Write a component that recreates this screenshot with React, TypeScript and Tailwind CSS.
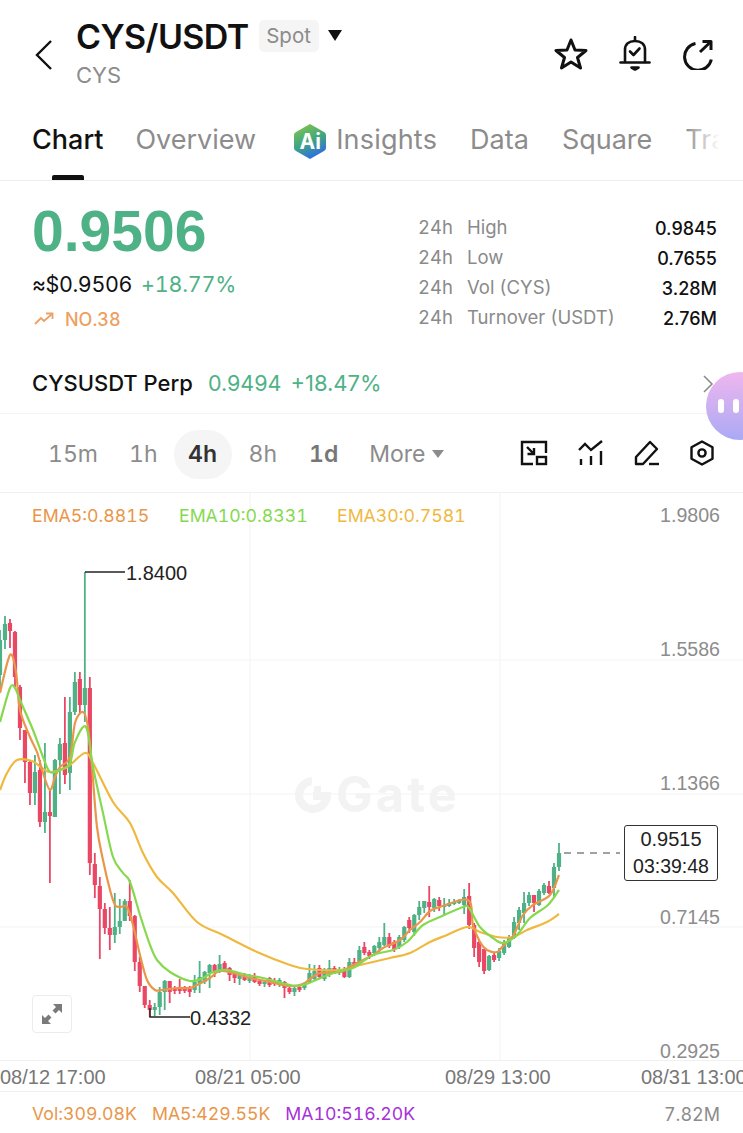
import React from "react";

const UP = "#4FB286";
const DOWN = "#EA4764";

// candle rows: up?, body top, body bottom, wick top, wick bottom (page y coords)
const candles: [number, number, number, number, number][] = [
  [1, 640, 675, 630, 690], [1, 624, 640, 616, 649], [0, 623, 631, 619, 648], [0, 632, 677, 631, 687], [0, 687, 728, 685, 740],
  [0, 730, 762, 730, 783], [0, 762, 793, 760, 805], [1, 772, 793, 755, 805], [0, 770, 822, 760, 827], [1, 812, 822, 743, 833],
  [0, 812, 816, 790, 883], [1, 760, 817, 759, 817], [1, 744, 760, 738, 794], [0, 743, 775, 697, 784], [1, 712, 773, 697, 790],
  [1, 682, 712, 672, 715], [0, 679, 705, 672, 713], [1, 688, 705, 572, 722], [0, 688, 863, 677, 875], [0, 864, 885, 853, 898],
  [0, 886, 909, 877, 959], [0, 909, 928, 903, 934], [0, 928, 935, 907, 950], [1, 927, 935, 893, 943], [1, 921, 927, 899, 934],
  [1, 901, 921, 899, 921], [0, 901, 916, 880, 921], [0, 916, 962, 915, 971], [0, 962, 986, 957, 992], [0, 986, 1005, 986, 1008],
  [0, 1005, 1010, 1000, 1017], [1, 1007, 1010, 1003, 1016], [1, 992, 1007, 987, 1015], [1, 981, 992, 980, 1010], [0, 981, 992, 981, 1003],
  [0, 989, 991, 986, 994], [0, 989, 991, 979, 994], [0, 989, 991, 986, 993], [0, 989, 992, 986, 997], [1, 982, 990, 975, 993],
  [1, 977, 983, 961, 993], [1, 972, 982, 971, 984], [1, 965, 973, 964, 988], [0, 965, 972, 964, 977], [1, 964, 970, 955, 973],
  [0, 963, 970, 961, 971], [0, 968, 975, 967, 981], [0, 974, 978, 972, 983], [1, 975, 979, 973, 985], [0, 977, 980, 973, 981],
  [1, 977, 981, 974, 983], [0, 977, 982, 973, 983], [0, 981, 984, 979, 986], [1, 982, 984, 982, 987], [0, 978, 985, 977, 987],
  [0, 981, 984, 978, 986], [1, 980, 985, 978, 987], [0, 982, 988, 981, 998], [0, 988, 992, 987, 994], [1, 988, 992, 986, 996],
  [0, 987, 990, 985, 992], [1, 983, 988, 982, 990], [1, 973, 982, 964, 983], [1, 971, 979, 965, 980], [0, 968, 977, 965, 979],
  [1, 971, 979, 968, 981], [1, 968, 975, 960, 977], [0, 968, 972, 966, 974], [1, 969, 973, 967, 975], [0, 969, 977, 967, 978],
  [1, 962, 977, 958, 978], [0, 962, 967, 958, 968], [1, 950, 963, 946, 965], [0, 947, 953, 942, 955], [0, 952, 956, 950, 959],
  [1, 946, 953, 945, 956], [1, 942, 948, 937, 952], [1, 937, 945, 923, 946], [0, 937, 946, 933, 948], [0, 942, 950, 940, 952],
  [1, 937, 947, 935, 949], [1, 927, 940, 926, 942], [0, 920, 928, 917, 933], [1, 915, 932, 914, 936], [1, 907, 915, 901, 920],
  [1, 901, 908, 901, 913], [0, 902, 907, 886, 917], [1, 899, 908, 898, 912], [0, 900, 906, 897, 911], [1, 905, 907, 898, 916],
  [1, 903, 906, 899, 907], [1, 902, 904, 899, 905], [1, 901, 903, 899, 904], [1, 897, 905, 889, 914], [0, 896, 925, 883, 929],
  [0, 925, 948, 923, 957], [0, 942, 962, 940, 967], [0, 949, 971, 949, 974], [1, 956, 970, 955, 971], [0, 955, 960, 953, 962],
  [1, 951, 958, 948, 961], [1, 942, 953, 940, 955], [1, 937, 947, 935, 948], [1, 922, 938, 917, 939], [1, 910, 923, 907, 930],
  [1, 903, 913, 892, 923], [1, 895, 903, 892, 906], [0, 895, 903, 895, 912], [1, 891, 905, 889, 906], [1, 885, 893, 883, 895],
  [0, 886, 893, 881, 894], [1, 867, 888, 863, 897], [1, 853, 867, 843, 871],
];

const ema5 = "0,693 10,655 16,672 20,710 30,737 37,752 43,773 50,790 55,777 60,767 70,757 75,723 83,712 88,727 92,767 97,827 103,860 110,890 115,905 120,907 127,907 133,925 140,955 147,980 155,990 162,990 177,988 190,988 197,985 210,978 217,972 223,971 233,973 250,978 270,982 290,986 303,984 310,979 320,973 340,972 353,965 373,955 383,948 400,940 410,930 420,922 430,911 440,907 468,900 473,925 480,942 487,950 497,952 503,946 513,936 523,915 533,905 550,895 559,875";
const ema10 = "0,722 10,688 15,688 20,700 33,730 43,757 50,772 60,770 70,763 75,742 86,727 93,767 103,813 113,857 123,873 130,882 140,915 150,945 157,960 170,972 190,981 203,978 213,972 227,970 247,975 263,978 290,985 303,985 323,977 340,971 353,968 373,955 393,950 407,942 423,925 440,917 463,907 469,908 480,927 493,938 503,943 517,935 530,918 548,905 559,890";
const ema30 = "0,790 7,773 17,760 32,761 42,768 50,772 63,769 70,765 85,753 93,763 113,802 130,823 143,853 157,877 173,893 197,922 223,935 257,952 290,965 307,969 340,970 360,965 390,958 410,953 430,942 447,935 467,927 480,932 497,937 513,937 527,930 547,922 559,914";

// catmull-rom through the points so the averages don't look kinked
function smooth(points: string) {
  const p = points.split(" ").map((s) => s.split(",").map(Number));
  let d = `M${p[0][0]} ${p[0][1]}`;
  for (let i = 0; i < p.length - 1; i++) {
    const a = p[i - 1] || p[i];
    const b = p[i];
    const c = p[i + 1];
    const e = p[i + 2] || c;
    d += `C${b[0] + (c[0] - a[0]) / 6} ${b[1] + (c[1] - a[1]) / 6} ${c[0] - (e[0] - b[0]) / 6} ${c[1] - (e[1] - b[1]) / 6} ${c[0]} ${c[1]}`;
  }
  return d;
}

function BackIcon() {
  return (
    <svg width="20" height="32" viewBox="0 0 20 32" fill="none" stroke="#111" strokeWidth="2.4">
      <path d="M17 2 L3 16 L17 30" />
    </svg>
  );
}

function StarIcon() {
  return (
    <svg width="34" height="34" viewBox="0 0 34 34" fill="none" stroke="#111" strokeWidth="3" strokeLinejoin="round">
      <path d="M17 3 L21 13 L32 13.5 L23.5 20.5 L26.5 31 L17 25 L7.5 31 L10.5 20.5 L2 13.5 L13 13 Z" />
    </svg>
  );
}

function BellIcon() {
  return (
    <svg width="32" height="36" viewBox="0 0 32 36" fill="none" stroke="#111" strokeWidth="2.6" strokeLinecap="round" strokeLinejoin="round">
      <path d="M6 26 V14 C6 8 10 5 16 5 C22 5 26 8 26 14 V26" />
      <path d="M1.5 26.5 H30.5" />
      <path d="M16 1 V4" />
      <path d="M11 15.5 L14.5 19 L20.5 12.5" />
      <path d="M12.5 31.5 H19.5 L16 33.5 Z" fill="#111" />
    </svg>
  );
}

function ShareIcon() {
  return (
    <svg width="32" height="32" viewBox="0 0 32 32" fill="none" stroke="#111" strokeWidth="3" strokeLinejoin="round">
      <path d="M13.5 5.5 A13.5 13.5 0 1 0 29.3 21.5" />
      <path d="M18 14 L28.5 4" />
      <path d="M20.5 3.5 H29 V12" />
    </svg>
  );
}

function ToolIcons() {
  return (
    <div className="flex items-center gap-[30px] -mt-[2px]">
      <svg width="28" height="26" viewBox="0 0 28 26" fill="none" stroke="#111" strokeWidth="2.4">
        <path d="M13 24 H2 V2 H26 V13" />
        <path d="M7 7 L13 13" />
        <path d="M7.5 14 H14 V8" />
        <rect x="17" y="17" width="9" height="7" />
      </svg>
      <svg width="26" height="26" viewBox="0 0 26 26" fill="none" stroke="#111" strokeWidth="2.4">
        <path d="M1 10 L7 4 L13 10 L24 1" />
        <path d="M3 19 V25 M13 16 V25 M23 11 V25" />
      </svg>
      <svg width="26" height="26" viewBox="0 0 26 26" fill="none" stroke="#111" strokeWidth="2.4" strokeLinejoin="round">
        <path d="M2 24 V17 L16 2 L23 9 L9 24 Z" />
        <path d="M15 24 H25" />
      </svg>
      <svg width="24" height="26" viewBox="0 0 24 26" fill="none" stroke="#111" strokeWidth="2.4" strokeLinejoin="round">
        <path d="M12 1.5 L22.5 7.2 V18.8 L12 24.5 L1.5 18.8 V7.2 Z" />
        <circle cx="12" cy="13" r="3.6" />
      </svg>
    </div>
  );
}

function AiBadge() {
  return (
    <span className="relative inline-flex w-[34px] h-[37px] items-center justify-center">
      <svg width="34" height="37" viewBox="0 0 34 37" className="absolute inset-0">
        <defs>
          <linearGradient id="aig" x1="0.1" y1="0" x2="0.5" y2="1">
            <stop offset="0" stopColor="#86C64A" />
            <stop offset="0.55" stopColor="#3FA77F" />
            <stop offset="1" stopColor="#2F6FE0" />
          </linearGradient>
        </defs>
        <path d="M17 1 L31 9 Q33 10 33 12 V25 Q33 27 31 28 L17 36 L3 28 Q1 27 1 25 V12 Q1 10 3 9 Z" fill="url(#aig)" />
      </svg>
      <span className="relative text-white text-[21px] font-bold leading-none">Ai</span>
    </span>
  );
}

function Stat({ label, value }: { label: string; value: string }) {
  return (
    <div className="flex items-center h-[30px] text-[18.5px] text-[#8a8a8a]">
      <span className="w-[49px]">24h</span>
      <span className="flex-1">{label}</span>
      <span className="text-[18px] font-medium text-[#111] proportional-nums">{value}</span>
    </div>
  );
}

function Chart() {
  return (
    <svg width="743" height="567" viewBox="0 493 743 567" className="absolute inset-0" fill="none">
      {[660, 794, 927].map((y) => (
        <path key={y} d={`M0 ${y}H743`} stroke="#f3f3f3" />
      ))}
      {[250, 500].map((x) => (
        <path key={x} d={`M${x} 493V1060`} stroke="#f3f3f3" />
      ))}
      {candles.map((c, i) => {
        const x = i * 4.991;
        const col = c[0] ? UP : DOWN;
        return (
          <g key={i}>
            <path d={`M${x} ${c[3]}V${c[4]}`} stroke={col} strokeWidth="1.8" />
            <rect x={x - 2.1} y={c[1]} width="4.2" height={Math.max(c[2] - c[1], 2)} fill={col} />
          </g>
        );
      })}
      <path d={smooth(ema30)} stroke="#EFB93F" strokeWidth="2.2" />
      <path d={smooth(ema5)} stroke="#E9964A" strokeWidth="2.2" />
      <path d={smooth(ema10)} stroke="#86D94F" strokeWidth="2.2" />
      <path d="M85 572H125" stroke="#222" strokeWidth="1.4" />
      <path d="M150 1008V1017H190" stroke="#222" strokeWidth="1.4" />
      <path d="M564 853H620" stroke="#444" strokeWidth="1.2" strokeDasharray="7 6" />
    </svg>
  );
}

export default function App() {
  return (
    <div className="relative w-[743px] h-[1133px] overflow-hidden bg-white font-['Inter',sans-serif] tabular-nums">
      {/* Header */}
      <div className="flex items-start h-[110px] pl-[34px] pr-[29px] pt-[15px]">
        <div className="pt-[24px] w-[42px]">
          <BackIcon />
        </div>
        <div>
          <div className="flex items-center h-[42px]">
            <span className="text-[34px] font-semibold tracking-[-0.6px] text-[#111]">CYS/USDT</span>
            <span className="ml-[10px] h-[32px] w-[60px] flex items-center justify-center rounded-[5px] bg-[#f5f5f5] text-[20.5px] text-[#8c8c8c]">Spot</span>
            <svg width="14" height="11" viewBox="0 0 14 11" className="ml-[9px] -mt-[2px]">
              <path d="M0 0H14L7 11Z" fill="#111" />
            </svg>
          </div>
          <div className="text-[22px] leading-[36px] text-[#8c8c8c]">CYS</div>
        </div>
        <div className="ml-auto flex items-center gap-[31px] pt-[21px]">
          <StarIcon />
          <BellIcon />
          <ShareIcon />
        </div>
      </div>

      {/* Tabs */}
      <div className="relative h-[71px] border-b border-[#eeeeee] overflow-hidden">
        <div className="flex items-center h-[60px] pl-[32px] text-[27px] text-[#8c8c8c] whitespace-nowrap">
          <span className="font-medium text-[#111]">Chart</span>
          <span className="ml-[32px]">Overview</span>
          <span className="ml-[37px] mr-[9px]"><AiBadge /></span>
          <span className="tracking-[0.2px]">Insights</span>
          <span className="ml-[33px]">Data</span>
          <span className="ml-[33px]">Square</span>
          <span className="ml-[33px]">Trade</span>
        </div>
        <div className="absolute right-0 top-0 h-full w-[58px] bg-gradient-to-r from-transparent to-white to-60%" />
        <div className="absolute left-[52px] bottom-0 w-[32px] h-[5px] rounded-t-[2px] bg-[#111]" />
      </div>

      {/* Price and 24h stats */}
      <div className="flex h-[173px] pl-[32px] pr-[26px]">
        <div className="w-[386px]">
          <div className="text-[57px] leading-[66px] mt-[17px] font-bold font-['Liberation_Sans',sans-serif] text-[#4FB286]">0.9506</div>
          <div className="flex items-center gap-[9px] h-[36px] mt-[2px] text-[21.5px]">
            <span className="text-[#111] tracking-[-0.4px]">≈$0.9506</span>
            <span className="text-[#4FB286] tracking-[-0.2px]">+18.77%</span>
          </div>
          <div className="flex items-center h-[34px] text-[18px] font-medium text-[#EE9F62]">
            <svg width="20" height="14" viewBox="0 0 20 14" fill="none" stroke="#EE9F62" strokeWidth="1.8" className="ml-[2px] mr-[11px]">
              <path d="M1 12 L7 6 L10 9 L18 2" />
              <path d="M12 1.5 H18.5 V7" />
            </svg>
            NO.38
          </div>
        </div>
        <div className="flex-1 pt-[32px]">
          <Stat label="High" value="0.9845" />
          <Stat label="Low" value="0.7655" />
          <Stat label="Vol (CYS)" value="3.28M" />
          <Stat label="Turnover (USDT)" value="2.76M" />
        </div>
      </div>

      {/* Perp row */}
      <div className="flex items-center h-[60px] pl-[32px] pr-[29px] border-b border-[#f3f3f3] proportional-nums">
        <span className="font-medium text-[22px] text-[#111]">CYSUSDT Perp</span>
        <span className="ml-[15px] text-[21.5px] text-[#4FB286]">0.9494</span>
        <span className="ml-[9px] text-[22px] text-[#4FB286]">+18.47%</span>
        <svg width="12" height="18" viewBox="0 0 12 18" fill="none" stroke="#8c8c8c" strokeWidth="1.6" className="ml-auto">
          <path d="M2 1 L10 9 L2 17" />
        </svg>
      </div>

      {/* Period and tools */}
      <div className="flex items-center h-[79px] pt-[2px] pr-[29px] border-b border-[#f0f0f0] text-[23px] text-[#8c8c8c]">
        <span className="ml-[48px]">15m</span>
        <span className="ml-[31px]">1h</span>
        <span className="ml-[16px] w-[58px] h-[49px] flex items-center justify-center rounded-full bg-[#f5f5f5] font-semibold text-[#333]">4h</span>
        <span className="ml-[17px]">8h</span>
        <span className="ml-[32px] font-semibold text-[#777]">1d</span>
        <span className="ml-[31px]">More</span>
        <svg width="12" height="8" viewBox="0 0 12 8" className="ml-[6px]">
          <path d="M0 0H12L6 8Z" fill="#8c8c8c" />
        </svg>
        <div className="ml-auto">
          <ToolIcons />
        </div>
      </div>

      {/* Chart */}
      <div className="relative h-[568px] border-b border-[#f0f0f0]">
        <div className="absolute left-[295px] top-[277px] flex items-center gap-[5px]">
          <svg width="36" height="36" viewBox="0 0 36 36" fill="none" stroke="#f3f3f3" strokeWidth="8">
            <path d="M17 4 A14 14 0 1 0 32 19 H18" />
            <rect x="19" y="9" width="7" height="7" fill="#f3f3f3" stroke="none" />
          </svg>
          <span className="text-[49px] leading-none font-bold tracking-[3px] text-[#f3f3f3]">Gate</span>
        </div>
        <Chart />
        <div className="absolute left-[32px] top-[12px] flex text-[17.7px] leading-[22px]">
          <span className="w-[147px] text-[#E9964A]">EMA5:0.8815</span>
          <span className="w-[158px] text-[#86D94F]">EMA10:0.8331</span>
          <span className="text-[#EFB93F]">EMA30:0.7581</span>
        </div>
        <div className="absolute right-[23px] top-[10px] h-[560px] flex flex-col justify-between items-end font-['Liberation_Sans',sans-serif] text-[19.6px] leading-[24px] text-[#8c8c8c]">
          <span>1.9806</span>
          <span>1.5586</span>
          <span>1.1366</span>
          <span>0.7145</span>
          <span>0.2925</span>
        </div>
        <span className="absolute left-[126px] top-[68px] font-['Liberation_Sans',sans-serif] text-[20px] leading-[24px] text-[#222]">1.8400</span>
        <span className="absolute left-[190px] top-[513px] font-['Liberation_Sans',sans-serif] text-[20px] leading-[24px] text-[#222]">0.4332</span>
        <div className="absolute left-[624px] top-[332px] w-[94px] h-[56px] flex flex-col items-center justify-center rounded-[3px] border border-[#333] bg-white leading-[27px] text-[#222] font-['Liberation_Sans',sans-serif]">
          <span className="text-[20px]">0.9515</span>
          <span className="text-[19.5px]">03:39:48</span>
        </div>
        <div className="absolute left-[32px] top-[502px] w-[40px] h-[38px] flex items-center justify-center rounded-[4px] border border-[#ececec] bg-white">
          <svg width="22" height="22" viewBox="0 0 22 22" fill="#7a7a7a">
            <path d="M21 1 V10 L18 7 L14.5 10.5 L11.5 7.5 L15 4 L12 1 Z" />
            <path d="M1 21 V12 L4 15 L7.5 11.5 L10.5 14.5 L7 18 L10 21 Z" />
          </svg>
        </div>
      </div>

      {/* Time axis */}
      <div className="relative h-[31px] border-b border-[#f0f0f0] font-['Liberation_Sans',sans-serif] text-[20px] leading-[33px] text-[#777] whitespace-nowrap">
        <span className="absolute left-0 top-0">08/12 17:00</span>
        <span className="absolute left-[195px] top-0">08/21 05:00</span>
        <span className="absolute left-[445px] top-0">08/29 13:00</span>
        <span className="absolute left-[641px] top-0">08/31 13:00</span>
      </div>

      {/* Volume */}
      <div className="flex items-center h-[45px] pl-[32px] pr-[23px] text-[17.7px]">
        <span className="text-[#E9964A]">Vol:309.08K</span>
        <span className="ml-[15px] text-[#E9964A]">MA5:429.55K</span>
        <span className="ml-[15px] text-[#A632D8]">MA10:516.20K</span>
        <span className="ml-auto text-[18px] text-[#8c8c8c]">7.82M</span>
      </div>

      {/* Floating assistant bubble */}
      <div className="absolute left-[706px] top-[372px] w-[68px] h-[68px] rounded-full bg-gradient-to-b from-[#EFB6EE] to-[#A9A9F5] flex items-center gap-[9px] pl-[12px]">
        <span className="w-[6px] h-[14px] rounded-full bg-white" />
        <span className="w-[6px] h-[14px] rounded-full bg-white" />
      </div>
    </div>
  );
}
